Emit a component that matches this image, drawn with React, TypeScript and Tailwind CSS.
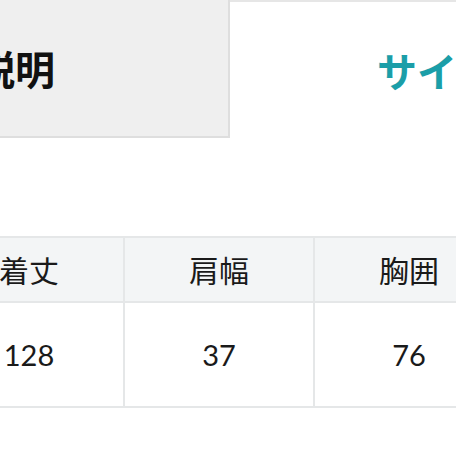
import React from "react";

const font = { fontFamily: '"Lato", "Noto Sans CJK JP", sans-serif' };

export default function App() {
  const headers = ["着丈", "肩幅", "胸囲"];
  const values = ["128", "37", "76"];
  return (
    <div
      className="w-[456px] h-[456px] overflow-hidden bg-white text-[#222]"
      style={font}
    >
      <div className="flex h-[138px]">
        <div className="w-[230px] shrink-0 flex items-center justify-end pr-[173px] bg-[#efefef] border-r-2 border-b-2 border-[#dedede] overflow-visible">
          <span
            className="whitespace-nowrap text-[40px] font-bold leading-none text-[#111]"
            style={{ fontFamily: '"Noto Sans CJK JP", sans-serif' }}
          >
            商品説明
          </span>
        </div>
        <div className="flex-1 flex items-center pl-[147px] border-t-2 border-[#e6e6e6] bg-white">
          <span
            className="whitespace-nowrap text-[40px] font-bold leading-none text-[#1b9ea8]"
            style={{ fontFamily: '"Noto Sans CJK JP", sans-serif' }}
          >
            サイズ表
          </span>
        </div>
      </div>
      <div className="mt-[98px] ml-[-67px] w-[572px] border-t-2 border-l-2 border-[#e5e7e8]">
        <div className="grid grid-cols-[190px_190px_190px]">
          {headers.map((h) => (
            <div
              key={h}
              className="h-[65px] flex items-center justify-center bg-[#f3f5f6] border-r-2 border-b-2 border-[#e5e7e8] text-[30px] text-[#1a1a1a]"
              style={{ fontFamily: '"Noto Sans CJK JP", sans-serif' }}
            >
              {h}
            </div>
          ))}
          {values.map((v) => (
            <div
              key={v}
              className="h-[105px] flex items-center justify-center bg-white border-r-2 border-b-2 border-[#e5e7e8] text-[29px] text-[#1a1a1a]"
            >
              {v}
            </div>
          ))}
        </div>
      </div>
    </div>
  );
}
